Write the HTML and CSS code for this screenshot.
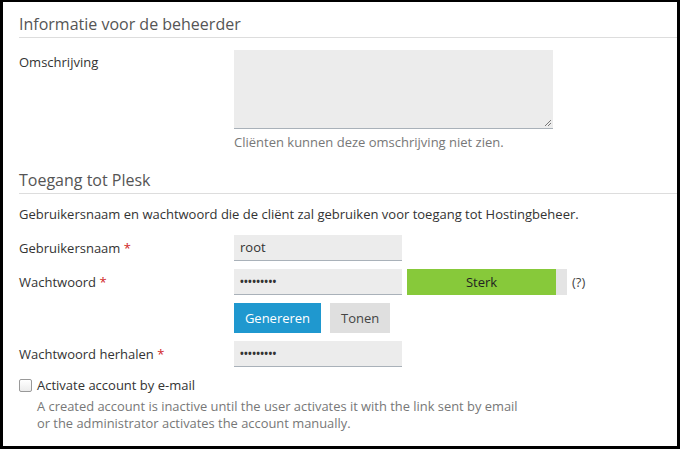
FILE: index.html
```html
<!DOCTYPE html>
<html>
<head>
<meta charset="utf-8">
<link rel="stylesheet" href="styles.css">
</head>
<body>
<div class="frame">
  <section class="section">
    <h2 class="section-title">Informatie voor de beheerder</h2>
    <div class="row row-top">
      <div class="label">Omschrijving</div>
      <div class="field">
        <div class="textarea"><svg class="grip" width="8" height="8" viewBox="0 0 8 8"><path d="M7 1L1 7M7 4L4 7" stroke="#777" stroke-width="1" fill="none"/></svg></div>
        <div class="hint">Cliënten kunnen deze omschrijving niet zien.</div>
      </div>
    </div>
  </section>
  <section class="section">
    <h2 class="section-title">Toegang tot Plesk</h2>
    <p class="desc">Gebruikersnaam en wachtwoord die de cliënt zal gebruiken voor toegang tot Hostingbeheer.</p>
    <div class="row">
      <div class="label">Gebruikersnaam <span class="req">*</span></div>
      <div class="field"><div class="input">root</div></div>
    </div>
    <div class="row">
      <div class="label">Wachtwoord <span class="req">*</span></div>
      <div class="field field-inline">
        <div class="input pw">&#8226;&#8226;&#8226;&#8226;&#8226;&#8226;&#8226;&#8226;&#8226;</div>
        <div class="strength"><div class="strength-fill">Sterk</div></div>
        <span class="help">(?)</span>
      </div>
    </div>
    <div class="row row-buttons">
      <div class="label"></div>
      <div class="field field-inline buttons">
        <button class="btn btn-primary">Genereren</button>
        <button class="btn">Tonen</button>
      </div>
    </div>
    <div class="row">
      <div class="label">Wachtwoord herhalen <span class="req">*</span></div>
      <div class="field"><div class="input pw">&#8226;&#8226;&#8226;&#8226;&#8226;&#8226;&#8226;&#8226;&#8226;</div></div>
    </div>
    <div class="check-row">
      <span class="checkbox"></span>
      <span class="check-label">Activate account by e-mail</span>
    </div>
    <div class="check-hint">A created account is inactive until the user activates it with the link sent by email<br>or the administrator activates the account manually.</div>
  </section>
</div>
</body>
</html>
```
FILE: styles.css
```css
html, body {
  margin: 0;
  padding: 0;
  background: #fff;
}
body {
  font-family: "Open Sans", "Liberation Sans", sans-serif;
  font-size: 13px;
  color: #333;
}
.frame {
  box-sizing: border-box;
  width: 680px;
  height: 449px;
  border-style: solid;
  border-color: #000;
  border-width: 2px 3px 3px 3px;
  padding: 11px 0 0 16px;
  overflow: hidden;
}
.section-title {
  margin: 0;
  font-weight: 400;
  font-size: 16px;
  color: #555;
  line-height: 22px;
  padding-bottom: 2px;
  border-bottom: 1px solid #ddd;
}
.row {
  display: flex;
  align-items: center;
  min-height: 25px;
}
.row-top {
  align-items: flex-start;
  margin-top: 12px;
}
.row-top .label {
  padding-top: 3px;
}
.label {
  width: 215px;
  flex: none;
  line-height: 18px;
}
.req {
  color: #d02525;
}
.field {
  display: flex;
  flex-direction: column;
}
.field-inline {
  flex-direction: row;
  align-items: center;
}
.textarea {
  position: relative;
  width: 319px;
  height: 78px;
  background: #ececec;
  border-bottom: 1px solid #a9b1b9;
}
.grip {
  position: absolute;
  right: 1px;
  bottom: 1px;
}
.hint {
  color: #777;
  margin-top: 4px;
  line-height: 18px;
}
.section + .section {
  margin-top: 18px;
}
.desc {
  margin: 11px 0 12px;
  line-height: 18px;
}
.input {
  box-sizing: border-box;
  width: 168px;
  height: 26px;
  background: #ececec;
  border-bottom: 1px solid #a9b1b9;
  padding: 0 6px;
  line-height: 25px;
  color: #333;
}
.pw {
  font-size: 10px;
  font-weight: 700;
  letter-spacing: 0.3px;
  padding-left: 6px;
}
.row + .row {
  margin-top: 8px;
}
.strength {
  margin-left: 5px;
  width: 160px;
  height: 26px;
  background: #e4e4e4;
}
.strength-fill {
  width: 149px;
  height: 26px;
  background: #87c93a;
  text-align: center;
  line-height: 26px;
  color: #222;
}
.help {
  margin-left: 5px;
  color: #444;
}
.buttons {
  gap: 9px;
}
.btn {
  font-family: inherit;
  font-size: 13px;
  height: 30px;
  border: 0;
  padding: 0 11px;
  background: #dfdfdf;
  color: #444;
  margin: 0;
}
.btn-primary {
  background: #1f98cf;
  color: #fff;
  padding: 0 10px;
  width: 87px;
}
.btn:not(.btn-primary) {
  width: 60px;
}
.check-row {
  display: flex;
  align-items: center;
  margin-top: 9px;
  line-height: 18px;
}
.checkbox {
  box-sizing: border-box;
  width: 13px;
  height: 13px;
  border: 1px solid #999;
  border-radius: 2px;
  background: linear-gradient(#fff, #ececec);
  margin: 0 5px 0 0;
}
.check-hint {
  margin: 4px 0 0 18px;
  color: #777;
  line-height: 17px;
  font-size: 12.9px;
}
```
